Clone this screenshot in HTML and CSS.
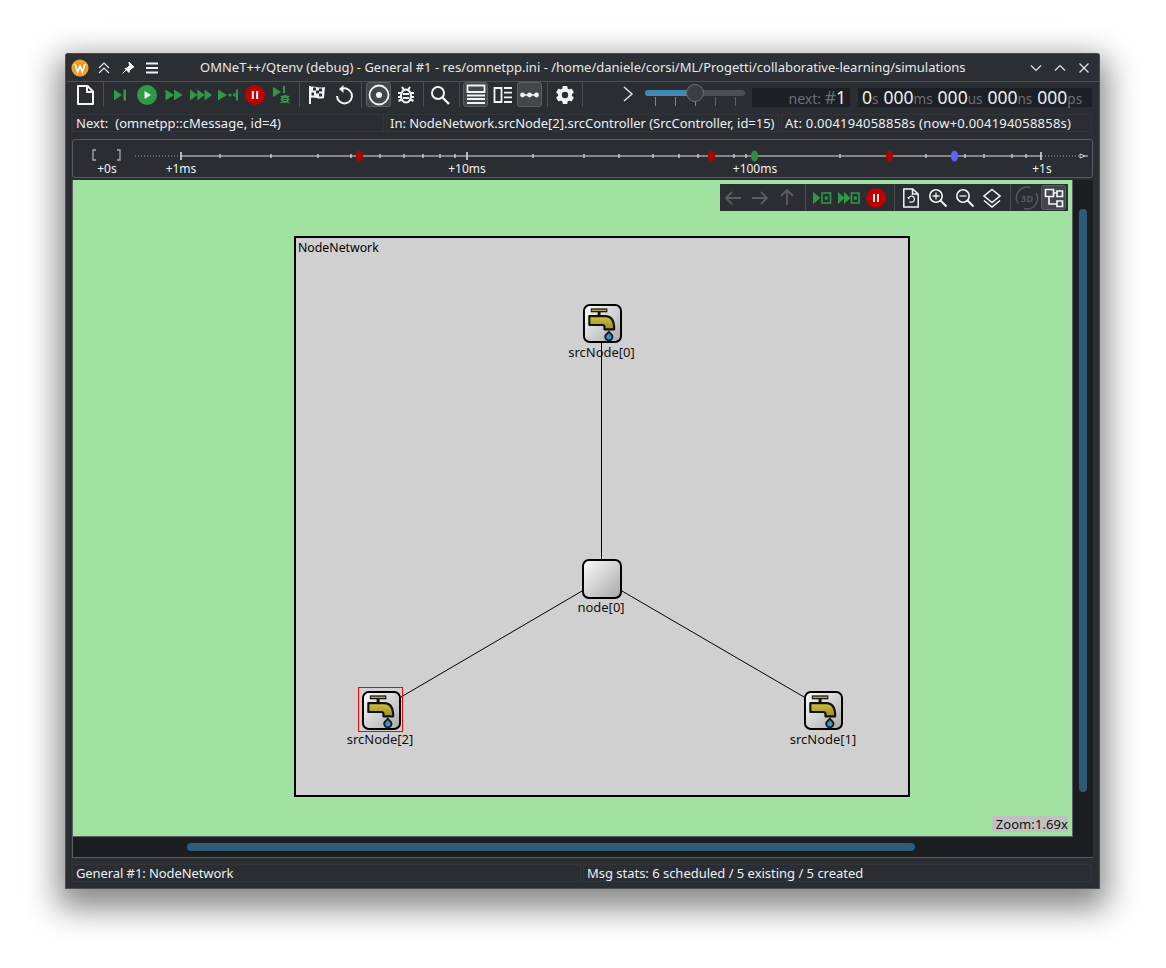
FILE: index.html
```html
<!DOCTYPE html>
<html lang="en">
<head>
<meta charset="utf-8">
<title>OMNeT++/Qtenv</title>
<link rel="stylesheet" href="styles.css">
</head>
<body>
<div class="window">
  <header class="titlebar">
    <div class="title-left">
      <svg class="wolf" viewBox="0 0 20 20"><circle cx="10" cy="10" r="9.500" fill="#f0a732"/><circle cx="10" cy="10" r="7.500" fill="#e89a24"/><path d="M4.500 5.500l2.800 9 2.700-6.500 2.700 6.500 2.800-9" fill="none" stroke="#fff" stroke-width="1.800"/></svg>
      <svg class="i16" viewBox="0 0 16 16"><path d="M3 8l5-5 5 5M3 13l5-5 5 5" fill="none" stroke="#e4e6e8" stroke-width="1.200"/></svg>
      <svg class="i16" viewBox="0 0 16 16"><path d="M9 2l5 5-2 1-2.500 2.500-.5 2-4-4 2-.5L9.500 5.500zM6 10l-3.500 3.500" fill="#f2f3f4" stroke="#f2f3f4"/></svg>
      <svg class="i16" viewBox="0 0 16 16"><path d="M2 3.500h12M2 8h12M2 12.500h12" stroke="#f2f3f4" stroke-width="2"/></svg>
    </div>
    <div class="title-text">OMNeT++/Qtenv (debug) - General #1 - res/omnetpp.ini - /home/daniele/corsi/ML/Progetti/collaborative-learning/simulations</div>
    <div class="title-right">
      <svg class="i14" viewBox="0 0 14 14"><path d="M2 4.500l5 5 5-5" fill="none" stroke="#e4e6e8" stroke-width="1.200"/></svg>
      <svg class="i14" viewBox="0 0 14 14"><path d="M2 9.500l5-5 5 5" fill="none" stroke="#e4e6e8" stroke-width="1.200"/></svg>
      <svg class="i14" viewBox="0 0 14 14"><path d="M2.500 2.500l9 9M11.500 2.500l-9 9" fill="none" stroke="#e4e6e8" stroke-width="1.200"/></svg>
    </div>
  </header>

  <div class="toolbar">
    <span class="tb first"><svg class="i22" viewBox="0 0 22 22"><path d="M4 2h9.500L19 7.500V20H4zM13 2.500v5.500h5.500" fill="none" stroke="#f4f5f6" stroke-width="2" stroke-linejoin="round"/></svg></span>
    <i class="sep s-a"></i>
    <span class="tb"><svg class="i22" viewBox="0 0 22 22"><path d="M5 5.500l8 5.500-8 5.500z" fill="#2f9a45"/><rect x="14.500" y="5.500" width="2.500" height="11" fill="#2f9a45"/></svg></span>
    <span class="tb"><svg class="i22" viewBox="0 0 22 22"><circle cx="11" cy="11" r="10" fill="#2f9a45"/><path d="M8.500 7l6.500 4-6.500 4z" fill="#e8efe9"/></svg></span>
    <span class="tb"><svg class="i22" viewBox="0 0 22 22"><path d="M2.500 5.500l8.500 5.500-8.500 5.500zM11 5.500l8.500 5.500-8.500 5.500z" fill="#2f9a45"/></svg></span>
    <span class="tb"><svg class="i26" viewBox="0 0 26 22"><path d="M2 5.500l7.300 5.500-7.300 5.500zM9.300 5.500l7.300 5.500-7.300 5.500zM16.600 5.500l7.400 5.500-7.400 5.500z" fill="#2f9a45"/></svg></span>
    <span class="tb"><svg class="i22" viewBox="0 0 22 22"><path d="M1 5.500l9 5.500-9 5.500z" fill="#2f9a45"/><circle cx="13" cy="11" r="1.600" fill="#2f9a45"/><path d="M15.500 11l3-2.500v5z" fill="#2f9a45"/><rect x="19" y="5.500" width="2" height="11" fill="#2f9a45"/></svg></span>
    <span class="tb"><svg class="i22" viewBox="0 0 22 22"><circle cx="11" cy="11" r="10" fill="#c00000"/><path d="M7.800 7h2.200v8H7.800zM12 7h2.200v8H12z" fill="#f0e4e4"/></svg></span>
    <span class="tb"><svg class="i22" viewBox="0 0 22 22"><path d="M2 3l8 5-8 5z" fill="#2f9a45"/><rect x="12" y="2" width="2" height="7" fill="#2f9a45"/><ellipse cx="14" cy="15" rx="3.800" ry="4" fill="#2f9a45"/><path d="M9.500 12l2 1M18.500 12l-2 1M9.500 15.500h2M18.500 15.500h-2M9.500 19l2-1M18.500 19l-2-1" stroke="#2f9a45" stroke-width="1.200"/><path d="M12.500 14.500h3M12.500 16.500h3" stroke="#2a2e32"/></svg></span>
    <i class="sep s-b"></i>
    <span class="tb"><svg class="i22" viewBox="0 0 22 22"><path d="M4 2v18" stroke="#f2f3f4" stroke-width="2"/><path d="M4 3c5-2 8 2 15 0l-1 11c-6 2-9-2-14 0z" fill="#f2f3f4"/><path d="M7 3.500h3v3H7zM13 4.500h3v3h-3zM10 6.500h3v3h-3zM5.500 8.500h2.500v3H5.500zM13 9.500h3v3h-3z" fill="#2a2e32"/></svg></span>
    <span class="tb"><svg class="i22" viewBox="0 0 22 22"><path d="M8.500 5A7.500 7.500 0 1 1 4 12" fill="none" stroke="#f2f3f4" stroke-width="2"/><path d="M10.500 1l-4.500 4 4.500 4z" fill="#f2f3f4"/></svg></span>
    <i class="sep s-b"></i>
    <span class="tb on"><svg class="i22" viewBox="0 0 22 22"><circle cx="11" cy="11" r="9.500" fill="none" stroke="#f2f3f4" stroke-width="1.800"/><circle cx="11" cy="11" r="3" fill="#f2f3f4"/></svg></span>
    <span class="tb"><svg class="i22" viewBox="0 0 22 22"><ellipse cx="11" cy="12" rx="5" ry="6.500" fill="none" stroke="#f2f3f4" stroke-width="2"/><path d="M7 3l2 3M15 3l-2 3M3 9h3M3 13h3M3.500 17l3-1.500M19 9h-3M19 13h-3M18.500 17l-3-1.500M8 10h6M8 14h6" stroke="#f2f3f4" stroke-width="2"/></svg></span>
    <i class="sep s-c"></i>
    <span class="tb"><svg class="i22" viewBox="0 0 22 22"><circle cx="9" cy="9" r="6" fill="none" stroke="#f2f3f4" stroke-width="2"/><path d="M13.500 13.500l6.500 6.500" stroke="#f2f3f4" stroke-width="2.400"/></svg></span>
    <i class="sep s-d"></i>
    <span class="tb on"><svg class="i22" viewBox="0 0 22 22"><path d="M2.500 1.500h17V8h-17zM2 11.500h18M2 15h18M2 19h18" fill="none" stroke="#f2f3f4" stroke-width="1.800"/></svg></span>
    <span class="tb"><svg class="i22" viewBox="0 0 22 22"><path d="M2.500 4h7v14h-7z" fill="none" stroke="#f2f3f4" stroke-width="1.800"/><path d="M12 4h8M12 8.700h8M12 13.300h8M12 18h8" stroke="#f2f3f4" stroke-width="1.800"/></svg></span>
    <span class="tb on"><svg class="i22" viewBox="0 0 22 22"><path d="M3 11h16" stroke="#f2f3f4" stroke-width="1.500"/><circle cx="3.500" cy="11" r="2.400" fill="#f2f3f4"/><circle cx="10.500" cy="11" r="2.400" fill="#f2f3f4"/><circle cx="17.500" cy="11" r="2.400" fill="#f2f3f4"/></svg></span>
    <i class="sep s-b"></i>
    <span class="tb"><svg class="i22" viewBox="0 0 22 22"><g fill="#f2f3f4"><rect x="8.500" y="2" width="5" height="18" rx="1"/><rect x="8.500" y="2" width="5" height="18" rx="1" transform="rotate(60 11 11)"/><rect x="8.500" y="2" width="5" height="18" rx="1" transform="rotate(120 11 11)"/><circle cx="11" cy="11" r="7"/></g><circle cx="11" cy="11" r="3.200" fill="#2a2e32"/></svg></span>
    <i class="sep s-e"></i>
    <div class="tb-end">
      <svg class="chev" viewBox="0 0 12 18"><path d="M2 2l8 7-8 7" fill="none" stroke="#dfe1e3" stroke-width="1.500"/></svg>
      <div class="slider">
        <div class="track"><div class="fill"></div></div>
        <div class="marks"><i class="blue"></i><i class="blue"></i><i class="blue"></i><i></i><i></i></div>
        <div class="knob"></div>
      </div>
      <div class="lcd next"><span class="dim">next: <b class="hash">#</b></span><span>1</span></div>
      <div class="lcd time"><span>0</span><small>s</small> <span>000</span><small>ms</small> <span>000</span><small>us</small> <span>000</span><small>ns</small> <span>000</span><small>ps</small></div>
    </div>
  </div>

  <div class="inforow">
    <div class="cell c1">Next:&nbsp; (omnetpp::cMessage, id=4)</div>
    <div class="cell c2">In: NodeNetwork.srcNode[2].srcController (SrcController, id=15)</div>
    <div class="cell c3">At: 0.004194058858s (now+0.004194058858s)</div>
  </div>

  <div class="timeline">
    <svg class="tl" viewBox="0 0 1021 40" width="1021" height="40">
      <path class="dots" d="M62 17H107M969 17H1007"/>
      <path class="axis" d="M108 17H968"/>
      <path class="big" d="M108 13v8M394 13v8M968 13v8"/>
      <path class="tick" d="M147 15v4M198 15v4M245 15v4M278 15v4M307 15v4M331 15v4M350 15v4M367 15v4M382 15v4M460 15v4M511 15v4M546 15v4M580 15v4M606 15v4M625 15v4M661 15v4M673 15v4M767 15v4M853 15v4M892 15v4M911 15v4M939 15v4M953 15v4"/>
      <ellipse cx="286.500" cy="17" rx="3.500" ry="5.500" fill="#b30000"/>
      <ellipse cx="638.500" cy="17" rx="3.500" ry="5.500" fill="#b30000"/>
      <ellipse cx="681.500" cy="17" rx="3.500" ry="5.500" fill="#2f8f3f"/>
      <ellipse cx="816.500" cy="17" rx="3.500" ry="5.500" fill="#b30000"/>
      <ellipse cx="881.500" cy="17" rx="3.500" ry="5.500" fill="#6060ff"/>
      <path class="bracket" d="M23 11h-3v10h3M44 11h3v10h-3"/>
      <path class="arrow" d="M1007 15l5 2-5 2zM1012 17h3"/>
      <text x="34" y="34">+0s</text><text x="108" y="34">+1ms</text><text x="394" y="34">+10ms</text><text x="682" y="34">+100ms</text><text x="969" y="34">+1s</text>
    </svg>
  </div>

  <div class="workarea">
    <div class="viewrow">
      <div class="canvas">
        <div class="module"><span class="modname">NodeNetwork</span></div>
        <svg class="links" width="999" height="656" viewBox="0 0 999 656">
          <path d="M528.500 160V380M509 411L328 517M549 411L731 517" stroke="#000" fill="none"/>
        </svg>
        <div class="node tapnode n0"><svg class="tap" viewBox="0 0 40 40"><use href="#tapicon"/></svg><span>srcNode[0]</span></div>
        <div class="node hub"><div class="plain"></div><span>node[0]</span></div>
        <div class="node tapnode n1"><svg class="tap" viewBox="0 0 40 40"><use href="#tapicon"/></svg><span>srcNode[1]</span></div>
        <div class="node tapnode n2"><svg class="tap" viewBox="0 0 40 40"><use href="#tapicon"/></svg><span>srcNode[2]</span><b class="sel"></b></div>

        <div class="overlay">
          <span class="ob"><svg class="i20" viewBox="0 0 20 20"><path d="M17 10H2M8 4l-6 6 6 6" fill="none" stroke="#5a5e62" stroke-width="1.800"/></svg></span>
          <span class="ob"><svg class="i20" viewBox="0 0 20 20"><path d="M1 10h15M10 4l6 6-6 6" fill="none" stroke="#5a5e62" stroke-width="1.800"/></svg></span>
          <span class="ob"><svg class="i20" viewBox="0 0 20 20"><path d="M9 17V2M3 8l6-6 6 6" fill="none" stroke="#5a5e62" stroke-width="1.800"/></svg></span>
          <i class="osep o-a"></i>
          <span class="ob"><svg class="i20" viewBox="0 0 20 20"><path d="M1 4l7.500 6L1 16z" fill="#2f9a45"/><path d="M10 5h8.500v10H10z" fill="none" stroke="#2f9a45" stroke-width="1.600"/><rect x="12.800" y="8.500" width="3" height="3" fill="#2f9a45"/></svg></span>
          <span class="ob"><svg class="i22w" viewBox="0 0 24 20"><path d="M1 4l6.500 6L1 16zM7 4l6.500 6L7 16z" fill="#2f9a45"/><path d="M14.500 5H22v10h-7.500z" fill="none" stroke="#2f9a45" stroke-width="1.600"/><rect x="16.800" y="8.500" width="3" height="3" fill="#2f9a45"/></svg></span>
          <span class="ob"><svg class="i20" viewBox="0 0 20 20"><circle cx="10" cy="10" r="9.800" fill="#c00000"/><path d="M7 6h2v8H7zM11 6h2v8h-2z" fill="#f2e6e6"/></svg></span>
          <i class="osep o-b"></i>
          <span class="ob"><svg class="i20" viewBox="0 0 20 20"><path d="M2.800 1h9l5.400 5v13H2.800zM11.500 1v5h5.500" fill="none" stroke="#f2f3f4" stroke-width="1.500"/><path d="M7.500 10.500a3 3 0 1 1 1 3" fill="none" stroke="#f2f3f4" stroke-width="1.200"/><path d="M6 9.500l2.500-.5-.3 2.500z" fill="#f2f3f4"/></svg></span>
          <span class="ob"><svg class="i20" viewBox="0 0 20 20"><circle cx="8" cy="8" r="6.200" fill="none" stroke="#f2f3f4" stroke-width="1.600"/><path d="M12.500 12.500l6 6" stroke="#f2f3f4" stroke-width="2"/><path d="M4.500 8h7M8 4.500v7" stroke="#f2f3f4" stroke-width="1.300"/></svg></span>
          <span class="ob"><svg class="i20" viewBox="0 0 20 20"><circle cx="8" cy="8" r="6.200" fill="none" stroke="#f2f3f4" stroke-width="1.600"/><path d="M12.500 12.500l6 6" stroke="#f2f3f4" stroke-width="2"/><path d="M4.500 8h7" stroke="#f2f3f4" stroke-width="1.300"/></svg></span>
          <span class="ob"><svg class="i20" viewBox="0 0 20 20"><path d="M10 1.500l8 6.500-8 6.500-8-6.500z" fill="none" stroke="#f2f3f4" stroke-width="1.600"/><path d="M2 12.500l8 6.500 8-6.500" fill="none" stroke="#f2f3f4" stroke-width="1.600"/></svg></span>
          <i class="osep o-b"></i>
          <span class="ob"><svg class="i24" viewBox="0 0 24 24"><path d="M3 17A10.500 10.500 0 0 1 15 1.500M21 7A10.500 10.500 0 0 1 9 22.500" fill="none" stroke="#55595d" stroke-width="1.500"/><text x="12" y="15.500" class="txt3d">3D</text></svg></span>
          <span class="ob on"><svg class="i20" viewBox="0 0 20 20"><path d="M1.500 1.500h8v7h-8zM13 3h5.500v5.500H13zM13 13h5.500v5.500H13zM5 8.500V16h8M9.500 5H13" fill="none" stroke="#f2f3f4" stroke-width="1.700"/></svg></span>
        </div>
        <div class="zoomlabel">Zoom:1.69x</div>
      </div>
      <div class="vscroll"><div class="vthumb"></div></div>
    </div>
    <div class="hscroll"><div class="hthumb"></div></div>
  </div>

  <footer class="statusbar">
    <div class="cell s1">General #1: NodeNetwork</div>
    <div class="cell s2">Msg stats: 6 scheduled / 5 existing / 5 created</div>
  </footer>
</div>

<svg class="defs" width="0" height="0">
  <defs>
    <linearGradient id="metal" x1="0" y1="0" x2="1" y2="1">
      <stop offset="0" stop-color="#fdfdfd"/><stop offset="1" stop-color="#a9a9a9"/>
    </linearGradient>
    <linearGradient id="brass" x1="0" y1="0" x2="0" y2="1">
      <stop offset="0" stop-color="#cfc23a"/><stop offset="1" stop-color="#98902a"/>
    </linearGradient>
    <g id="tapicon">
      <rect x="1" y="1" width="38" height="38" rx="6" fill="url(#metal)" stroke="#000" stroke-width="2"/>
      <path d="M8 6.500h17" stroke="#111" stroke-width="4"/>
      <path d="M9 6.500h15" stroke="#b5a92a" stroke-width="1.500"/>
      <path d="M16.500 8v5" stroke="#111" stroke-width="3"/>
      <path d="M6.500 12.500H23c6 0 9 4 9 13.500H22v-3c0-1-.8-1.500-2-1.500H6.500z" fill="url(#brass)" stroke="#111" stroke-width="2.200" stroke-linejoin="round"/>
      <path d="M26.500 27c-3 3.500-4.700 4.500-4.700 6.500a4.700 4.700 0 0 0 9.400 0c0-2-1.700-3-4.700-6.500z" fill="#1c1c1c"/>
      <path d="M26.500 30c-1.600 1.700-2.700 2.400-2.700 3.600a2.700 2.700 0 0 0 5.400 0c0-1.200-1.100-1.900-2.700-3.600z" fill="#2f97d8"/>
    </g>
  </defs>
</svg>
</body>
</html>
```
FILE: styles.css
```css
* { box-sizing: border-box; }
html, body { margin: 0; height: 100%; background: #fff; }
body { padding: 53px 0 0 65px; font-family: "Noto Sans", sans-serif; overflow: hidden; }
svg { display: block; flex: none; }
.defs { position: absolute; }
.i14 { width: 14px; height: 14px; }
.i16 { width: 16px; height: 16px; }
.i20 { width: 20px; height: 20px; }
.i22 { width: 22px; height: 22px; }
.i22w { width: 24px; height: 20px; }
.i24 { width: 24px; height: 24px; }
.i26 { width: 26px; height: 22px; }
.wolf { width: 18px; height: 18px; margin-right: -1px; }

.window {
  width: 1035px; height: 836px;
  display: flex; flex-direction: column;
  background: #2a2e32; color: #f0f1f2;
  border: 1px solid #4a4e52; border-top-color: #45494d;
  border-radius: 3px 3px 0 0;
  box-shadow: 0 12px 32px 7px rgba(0,0,0,.48);
}

.titlebar {
  height: 28px; flex: none;
  display: flex; align-items: center;
  border-bottom: 1px solid #4c5054;
  background: #2c3034;
}
.title-left { display: flex; align-items: center; gap: 8px; padding-left: 5px; width: 134px; flex: none; }
.title-text { font-size: 13px; color: #e6e8ea; white-space: nowrap; flex: 1; margin-top: -2px; }
.title-right { display: flex; gap: 10px; padding-right: 8px; justify-content: flex-end; }

.toolbar {
  height: 25px; flex: none;
  display: flex; align-items: center;
  padding-left: 6px;
}
.tb { width: 27px; height: 25px; display: flex; align-items: center; justify-content: center; border-radius: 3px; flex: none; }
.tb.first { width: 26px; }
.tb.on { width: 25px; margin: 0 1px; background: #43474c; border: 1px solid #5b5f63; }
.sep { width: 1px; height: 25px; background: #4a4e52; flex: none; }
.s-a { margin: 0 2px 0 5px; }
.s-b { margin: 0 3px 0 4px; }
.s-c { margin: 0 2px 0 4px; }
.s-d { margin: 0 2px 0 6px; }
.s-e { margin: 0 0 0 4px; }
.tb-end { display: flex; align-items: flex-start; flex: 1; height: 25px; padding-left: 39px; }
.chev { width: 12px; height: 18px; margin: 3px 11px 0 0; }
.slider { width: 101px; height: 24px; position: relative; margin: 2px 6px 0 0; }
.track { position: absolute; left: 0; top: 6px; width: 100px; height: 6px; border-radius: 3px; background: #4b4f53; }
.fill { width: 50px; height: 6px; border-radius: 3px; background: #3d8ab5; }
.knob { position: absolute; left: 41px; top: 0; width: 18px; height: 18px; border-radius: 50%; background: #3a3e43; border: 1px solid #6b6f73; }
.marks { position: absolute; left: 10px; top: 13px; display: flex; gap: 19px; }
.marks i { width: 1px; height: 9px; background: #5f6367; }
.marks i.blue { background: #3d9ad0; }
.lcd { height: 19px; margin-top: 6px; background: #1c2024; display: flex; align-items: baseline; padding: 0 3px; font-size: 17.500px; line-height: 19px; white-space: nowrap; color: #eceef0; }
.lcd.next { width: 98px; margin-right: 8px; justify-content: flex-end; padding-right: 4px; }
.lcd .dim { color: #6c7074; font-size: 14px; margin-right: 0; white-space: pre; }
.hash { font-weight: 400; font-size: 17.500px; }
.lcd.time { width: 234px; padding-left: 4px; }
.lcd small { font-size: 13.500px; color: #6c7074; margin-right: 5px; }

.inforow { height: 32px; flex: none; display: flex; padding: 7px 7px 0 6px; gap: 2px; }
.cell { border: 1px solid #31353a; font-size: 13px; line-height: 16px; height: 18px; padding-left: 3px; white-space: nowrap; color: #eaf0f4; }
.c1 { width: 312px; letter-spacing: .06px; }
.c2 { width: 393px; letter-spacing: -.03px; }
.c3 { flex: 1; letter-spacing: .22px; }

.timeline {
  height: 39px; flex: none;
  margin: 0 6px;
  border: 1px solid #575b5f; border-radius: 3px;
}
.tl { margin: -1px 0 0; }
.tl text { fill: #f0f1f2; text-anchor: middle; font-family: "Noto Sans", sans-serif; font-size: 12px; }
.axis { stroke: #a2a4a6; stroke-width: 1.500; fill: none; }
.dots { stroke: #a2a4a6; stroke-width: 1; stroke-dasharray: 1 2; fill: none; }
.big { stroke: #e2e3e4; stroke-width: 1.500; fill: none; }
.tick { stroke: #c5c6c7; stroke-width: 1.500; fill: none; }
.bracket { stroke: #a8aaac; stroke-width: 1.300; fill: none; }
.arrow { stroke: #d8d9da; fill: none; }

.workarea { flex: none; margin: 2px 6px 0; height: 678px; display: flex; flex-direction: column; background: #1b1e21; border-bottom: 1px solid #5a5e62; border-left: 1px solid #5a5e62; }
.viewrow { display: flex; height: 657px; }
.canvas { width: 1000px; height: 657px; flex: none; position: relative; background: #a0e2a0; border-right: 1px solid #5a5e62; border-bottom: 1px solid #5a5e62; overflow: hidden; }
.module { position: absolute; left: 221px; top: 56px; width: 616px; height: 561px; background: #d0d0d0; border: 2px solid #000; }
.modname { position: absolute; left: 2px; top: 2px; font-size: 12.300px; line-height: 16px; color: #000; }
.links { position: absolute; left: 0; top: 0; }
.node { position: absolute; width: 80px; display: flex; flex-direction: column; align-items: center; }
.tapnode { width: 79px; }
.node span { font-size: 13px; line-height: 14px; margin-top: 2px; color: #111; white-space: nowrap; }
.tap { width: 39px; height: 39px; }
.n0 { left: 490px; top: 124px; }
.n1 { left: 711px; top: 511px; }
.n2 { left: 269px; top: 511px; }
.n2 span { margin-right: 3px; }
.n0 span { margin-right: 2px; }
.n1 span { margin-right: 1px; }
.hub { left: 489px; top: 379px; }
.hub span { margin-right: 2px; margin-top: 1px; }
.plain { width: 40px; height: 40px; border: 2px solid #000; border-radius: 7px; background: linear-gradient(135deg, #fafafa, #a9a9a9); }
.sel { position: absolute; left: 16px; top: -4px; width: 45px; height: 45px; border: 1px solid #ff0000; }

.overlay { position: absolute; left: 647px; top: 4px; width: 348px; height: 27px; background: #2a2e32; display: flex; align-items: center; }
.ob { width: 27px; height: 27px; display: flex; align-items: center; justify-content: center; border-radius: 3px; flex: none; }
.ob.on { width: 25px; height: 25px; margin: 0 1px; background: #43474c; border: 1px solid #5b5f63; }
.osep { width: 1px; height: 27px; background: #4a4e52; flex: none; }
.o-a { margin: 0 2px 0 4px; }
.o-b { margin: 0 2px 0 5px; }
.txt3d { font-size: 9.500px; fill: #55595d; text-anchor: middle; font-family: "Noto Sans", sans-serif; font-weight: 700; }
.zoomlabel { position: absolute; right: 4px; bottom: 4px; height: 16px; padding: 0 0 0 4px; background: #c0c0c0; font-size: 13px; line-height: 16px; color: #111; letter-spacing: .08px; }

.vscroll { width: 20px; height: 656px; display: flex; justify-content: center; padding-top: 29px; }
.vthumb { width: 8px; height: 583px; border-radius: 4px; background: #2d5b78; }
.hscroll { height: 20px; display: flex; align-items: center; padding-left: 114px; }
.hthumb { width: 728px; height: 8px; border-radius: 4px; background: #2d5b78; }

.statusbar { flex: none; display: flex; padding: 6px 7px 0 6px; gap: 2px; }
.s1 { width: 509px; letter-spacing: -.09px; }
.s2 { flex: 1; letter-spacing: -.02px; }
```
